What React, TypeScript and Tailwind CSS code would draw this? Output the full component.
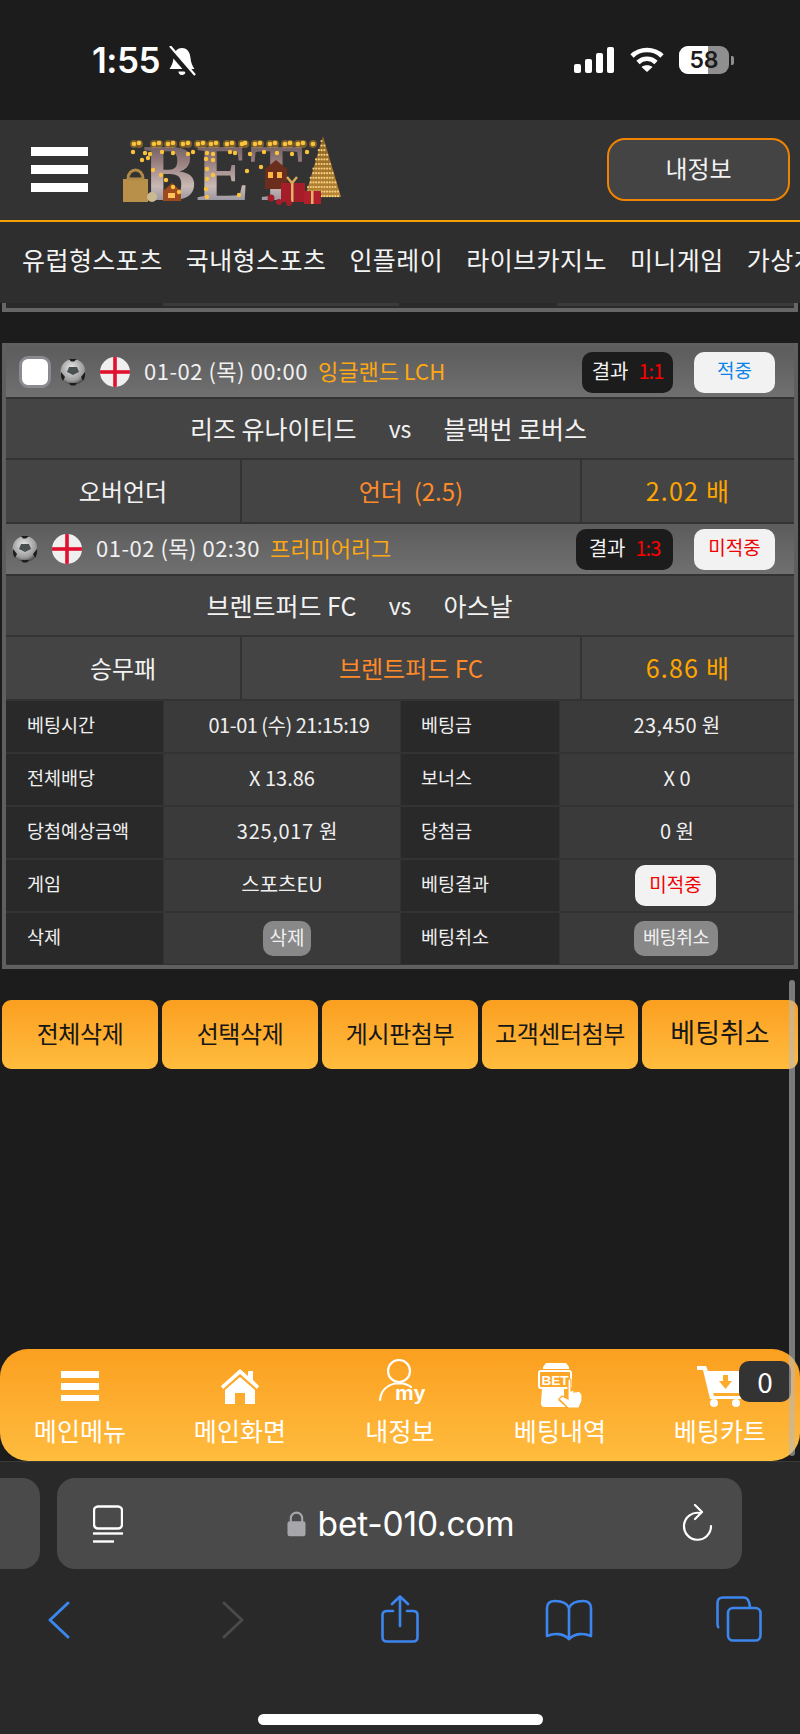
import React from "react";

const KR = "font-['Noto_Sans_CJK_KR','Noto_Sans',sans-serif]";

function Ball({ className = "" }: { className?: string }) {
  return (
    <svg viewBox="0 0 26 28" className={className}>
      <defs>
        <radialGradient id="ballg" cx="45%" cy="35%" r="70%">
          <stop offset="0" stopColor="#e8e8e8" />
          <stop offset="0.7" stopColor="#9a9a9a" />
          <stop offset="1" stopColor="#2a2a2a" />
        </radialGradient>
      </defs>
      <ellipse cx="13" cy="14" rx="12.5" ry="13" fill="url(#ballg)" />
      <path d="M9 9 L17 9 L19 14 L13 17 L7 14Z" fill="#4a4f52" />
      <path d="M1 14 L5 19 L3 23 A13 13 0 0 1 1 14Z M25 14 L21 19 L23 23 A13 13 0 0 0 25 14Z M9 25 L17 25 L15 27.5 L11 27.5Z M9 1 L17 1 L14 3.5 L11 3.5Z" fill="#1d1d1d" />
    </svg>
  );
}

function Flag({ className = "" }: { className?: string }) {
  return (
    <svg viewBox="0 0 30 30" className={className}>
      <circle cx="15" cy="15" r="15" fill="#efefef" />
      <clipPath id="fc"><circle cx="15" cy="15" r="15" /></clipPath>
      <g clipPath="url(#fc)" fill="#e0102f">
        <rect x="13.2" y="0" width="3.6" height="30" />
        <rect x="0" y="13.2" width="30" height="3.6" />
      </g>
    </svg>
  );
}

function Logo() {
  const top = [13, 18, 33, 38, 47, 52, 62, 67, 77, 82, 90, 95, 106, 111, 121, 124, 134, 139, 149, 154, 164, 169, 177, 182, 192];
  const second = [12, 24, 29, 41, 52, 67, 72, 86, 92, 109, 114, 129, 143, 156, 171, 186];
  const chain: [number, number][] = [
    [21, 29], [27, 27], [32, 39], [40, 44], [45, 49], [52, 56], [58, 61], [85, 28], [86, 38], [86, 48], [85, 58], [86, 66], [92, 29], [92, 44], [126, 40], [140, 36], [118, 64],
  ];
  const tree: [number, number][] = [];
  for (let r = 0; r < 13; r++) {
    const y = 10 + r * 4.6;
    const half = 1.5 + r * 1.35;
    for (let c = 0; c <= r; c++) {
      const x = 202 - half + (2 * half * (c + 0.5 * (r % 2))) / (r + 1);
      tree.push([x, y]);
    }
  }
  return (
    <svg viewBox="0 0 220 76" className="w-[220px] h-[76px] blur-[0.6px]">
      <defs>
        <linearGradient id="lg" x1="0" y1="0" x2="0" y2="1">
          <stop offset="0" stopColor="#46434c" />
          <stop offset="0.35" stopColor="#93797a" />
          <stop offset="0.65" stopColor="#c9b8b4" />
          <stop offset="0.85" stopColor="#8f8f9e" />
          <stop offset="1" stopColor="#4f5b70" />
        </linearGradient>
        <linearGradient id="tree" x1="0" y1="0" x2="0" y2="1">
          <stop offset="0" stopColor="#8a6226" />
          <stop offset="1" stopColor="#b98636" />
        </linearGradient>
      </defs>
      <text x="22" y="69" fontFamily="Liberation Serif, serif" fontWeight="700" fontSize="80" textLength="160" lengthAdjust="spacingAndGlyphs" fill="url(#lg)">BET</text>
      <path d="M42 60 l9 -8 9 8 v10 h-18z" fill="#9c4a1e" />
      <rect x="47" y="62" width="7" height="5" fill="#ffc35a" />
      <path d="M144 38 l11 -9 11 9 v20 h-22z" fill="#6b2e1c" />
      <rect x="147" y="41" width="5" height="6" fill="#ffb544" />
      <rect x="156" y="41" width="5" height="6" fill="#ffb544" />
      <path d="M202 5 L220 66 L184 66Z" fill="url(#tree)" />
      <g fill="#f5cf7d">
        {tree.map(([x, y], i) => (
          <circle key={i} cx={x} cy={y} r="1.1" />
        ))}
      </g>
      <rect x="2" y="48" width="25" height="23" fill="#b8904a" />
      <path d="M7 48 C7 36 22 36 22 48Z" fill="none" stroke="#b08a45" strokeWidth="3" />
      <circle cx="31" cy="66" r="5" fill="#cdb98f" />
      <rect x="160" y="52" width="24" height="19" fill="#a51d28" />
      <rect x="183" y="60" width="17" height="13" fill="#b0202c" />
      <rect x="170" y="52" width="2.5" height="19" fill="#e0b36a" />
      <rect x="190" y="60" width="2.5" height="13" fill="#e0b36a" />
      <path d="M166 46 l5 6 5 -6" fill="none" stroke="#d9a95a" strokeWidth="2.5" />
      <circle cx="150" cy="67" r="3.5" fill="#a51d28" /><circle cx="158" cy="71" r="3" fill="#a51d28" /><circle cx="168" cy="72" r="3" fill="#a51d28" />
      <g fill="#ffb020" opacity="0.35">
        {top.map((x, i) => <circle key={i} cx={x} cy={13} r="4" />)}
      </g>
      <g fill="#fbc23c">
        {top.map((x, i) => <circle key={i} cx={x} cy={13 - (i % 2)} r="2.3" />)}
        {second.map((x, i) => <circle key={i} cx={x} cy={21 + (i % 3)} r="2.2" />)}
        {chain.map(([x, y], i) => <circle key={i} cx={x} cy={y} r="2.2" />)}
      </g>
    </svg>
  );
}

function StatusBar() {
  return (
    <div className="h-[120px] bg-[#1c1c1c] flex items-start text-white shrink-0">
      <div className="flex items-center pl-[92px] pt-[40px] h-[80px] w-[400px]">
        <span className="text-[35px] leading-[40px] font-semibold font-['Inter',sans-serif] tracking-[-0.5px]">1:55</span>
        <svg viewBox="0 0 28 31" className="w-[28px] h-[31px] ml-[8px] mt-[2px]">
          <path d="M14 2 C8.5 2 6 6.5 5.5 12 C5 17 3.5 20 1.5 23 H26.5 C24.5 20 23 17 22.5 12 C22 6.5 19.5 2 14 2Z" fill="#fff" />
          <path d="M10.5 25.5 H17.5 A3.5 3.5 0 0 1 10.5 25.5Z" fill="#fff" />
          <path d="M0 2 L25 31" stroke="#1c1c1c" strokeWidth="5.5" />
          <path d="M2 0 L27 29" stroke="#fff" strokeWidth="2.2" />
        </svg>
      </div>
      <div className="flex items-center pl-[174px] pt-[40px] h-[80px]">
        <svg viewBox="0 0 40 26" className="w-[40px] h-[26px]" fill="#fff">
          <rect x="0" y="17" width="7" height="9" rx="2" />
          <rect x="11" y="12" width="7" height="14" rx="2" />
          <rect x="22" y="6" width="7" height="20" rx="2" />
          <rect x="33" y="0" width="7" height="26" rx="2" />
        </svg>
        <svg viewBox="0 0 34 26" className="w-[34px] h-[26px] ml-[16px]" fill="none" stroke="#fff" strokeWidth="4.6">
          <path d="M2 9 C10 1 24 1 32 9" />
          <path d="M8 15.5 C13 10.5 21 10.5 26 15.5" />
          <path d="M17 25 L11.5 20 C14 17.5 20 17.5 22.5 20Z" fill="#fff" stroke="none" />
        </svg>
        <div className="relative ml-[15px] w-[50px] h-[28px] rounded-[9px] overflow-hidden bg-[#8f8f8f] flex items-center justify-center">
          <div className="absolute left-0 top-0 bottom-0 w-[29px] bg-white" />
          <span className="relative text-[#1c1c1c] text-[23px] leading-[28px] font-semibold font-['Inter',sans-serif]">58</span>
        </div>
        <div className="w-[3px] h-[9px] ml-[2px] rounded-r-[2px] bg-[#8f8f8f]" />
      </div>
    </div>
  );
}

function Header() {
  return (
    <div className="h-[102px] bg-[#333333] border-b-2 border-[#f5a000] flex items-center shrink-0">
      <div className="ml-[31px] w-[57px] flex flex-col gap-[9px] -mt-[2px]">
        <div className="h-[9px] bg-white" />
        <div className="h-[9px] bg-white" />
        <div className="h-[9px] bg-white" />
      </div>
      <div className="ml-[33px] -mt-[2px]"><Logo /></div>
      <div className={`ml-auto mr-[10px] w-[183px] h-[63px] -mt-[2px] pb-[3px] rounded-[18px] border-2 border-[#f08400] bg-[#444444] flex items-center justify-center text-[#f2f2f2] text-[24px] ${KR}`}>
        내정보
      </div>
    </div>
  );
}

function TopNav() {
  const items = ["유럽형스포츠", "국내형스포츠", "인플레이", "라이브카지노", "미니게임", "가상게임"];
  return (
    <div className={`h-[81px] bg-[#2e2e2e] flex items-center pl-[22px] gap-[23px] overflow-hidden whitespace-nowrap text-[#f4f4f4] text-[25px] tracking-[0.45px] shrink-0 ${KR}`}>
      {items.map((t) => (
        <span key={t} className="-mt-[6px]">{t}</span>
      ))}
    </div>
  );
}

function Strip() {
  return (
    <div className="mx-[2px] h-[9px] border-x-4 border-b-4 border-[#666666] bg-[#2b2b2b] shrink-0">
      <div className="h-[3px] grid grid-cols-[157px_236px_158px_1fr]">
        <div className="bg-[#2a2a2a]" />
        <div className="bg-[#3a3a3a]" />
        <div className="bg-[#2a2a2a]" />
        <div className="bg-[#3a3a3a]" />
      </div>
    </div>
  );
}

function ResultPill({ score, wide }: { score: string; wide?: boolean }) {
  return (
    <div className={`${wide ? "w-[97px]" : "w-[91px]"} h-[41px] pb-[3px] rounded-[10px] bg-[#1c1c1c] flex items-center justify-center gap-[10px] text-[20px] text-[#f2f2f2]`}>
      <span>결과</span>
      <span className="text-[#ff0000] tracking-[-1px]">{score}</span>
    </div>
  );
}

function Match(props: {
  first: boolean;
  date: string;
  league: string;
  score: string;
  hit: boolean;
  home: string;
  away: string;
  type: string;
  pick: string;
  odds: string;
}) {
  return (
    <div className="flex flex-col">
      <div className={`${props.first ? "h-[50px] pl-[13px]" : "h-[50px] pl-[6px]"} bg-gradient-to-b from-[#5c5c5c] to-[#707070] flex items-center text-[22px] whitespace-nowrap`}>
        {props.first && (
          <div className="w-[32px] h-[32px] rounded-[9px] border-[3px] border-[#8a8a90] bg-white mr-[9px]" />
        )}
        <Ball className="w-[26px] h-[28px] mr-[14px]" />
        <Flag className="w-[30px] h-[30px] mr-[14px]" />
        <span className="text-[#f0f0f0] tracking-[0.5px] -mt-[4px]">{props.date}</span>
        <span className="ml-[10px] text-[#ffa812] -mt-[4px]">{props.league}</span>
        <div className="ml-auto mr-[19px] flex items-center gap-[21px]">
          <ResultPill score={props.score} wide={!props.first} />
          <div className={`w-[81px] h-[41px] pb-[3px] rounded-[10px] bg-[#f2f2f2] flex items-center justify-center text-[19px] ${props.hit ? "text-[#0a84e8]" : "text-[#f00000]"}`}>
            {props.hit ? "적중" : "미적중"}
          </div>
        </div>
      </div>
      <div className="mt-[2px] h-[59px] bg-[#444444] flex items-center text-[25px] text-[#f2f2f2]">
        <div className="flex-1 text-right pr-[30px]">{props.home}</div>
        <div className="w-[27px] text-center text-[23px] shrink-0">vs</div>
        <div className="flex-1 text-left pl-[30px]">{props.away}</div>
      </div>
      <div className="mt-[2px] h-[62px] grid grid-cols-[234px_1fr_212px] gap-[2px] text-[24px] text-center">
        <div className="bg-[#444444] flex items-center justify-center text-[#f2f2f2]">{props.type}</div>
        <div className="bg-[#444444] flex items-center justify-center text-[#ff8a2a] whitespace-pre">{props.pick}</div>
        <div className="bg-[#444444] flex items-center justify-center text-[#ffa500] text-[25px] tracking-[1.2px]">{props.odds}</div>
      </div>
    </div>
  );
}

function Info({ rows }: { rows: [string, React.ReactNode, string, React.ReactNode][] }) {
  return (
    <div className="mt-[2px] pb-[1px] flex flex-col gap-[2px] text-[18.5px] text-[#f0f0f0]">
      {rows.map((r, i) => (
        <div key={i} className="h-[51px] grid grid-cols-[157px_236px_158px_1fr] gap-x-px">
          <div className="bg-[#292929] flex items-center pl-[21px] pb-[4px]">{r[0]}</div>
          <div className="bg-[#3a3a3a] flex items-center justify-center text-[20px] pb-[4px]">{r[1]}</div>
          <div className="bg-[#292929] flex items-center pl-[20px] pb-[4px]">{r[2]}</div>
          <div className="bg-[#3a3a3a] flex items-center justify-center text-[20px] pb-[4px]">{r[3]}</div>
        </div>
      ))}
    </div>
  );
}

function Card() {
  return (
    <div className={`mx-[2px] mt-[31px] border-4 border-[#5f5f5f] bg-[#333333] shrink-0 ${KR}`}>
      <Match first date="01-02 (목) 00:00" league="잉글랜드 LCH" score="1:1" hit home="리즈 유나이티드" away="블랙번 로버스" type="오버언더" pick="언더  (2.5)" odds="2.02 배" />
      <div className="h-[2px]" />
      <Match first={false} date="01-02 (목) 02:30" league="프리미어리그" score="1:3" hit={false} home="브렌트퍼드 FC" away="아스날" type="승무패" pick="브렌트퍼드 FC" odds="6.86 배" />
      <Info
        rows={[
          ["베팅시간", <span className="ml-[14px] tracking-[-0.5px]">01-01 (수) 21:15:19</span>, "베팅금", <span className="tracking-[0.4px]">23,450 원</span>],
          ["전체배당", "X 13.86", "보너스", "X 0"],
          ["당첨예상금액", <span className="ml-[11px] tracking-[0.7px]">325,017 원</span>, "당첨금", "0 원"],
          ["게임", "스포츠EU", "베팅결과", <div className="mt-[4px] mr-[3px] w-[81px] h-[41px] pb-[3px] rounded-[10px] bg-[#f2f2f2] flex items-center justify-center text-[19px] text-[#f00000]">미적중</div>],
          ["삭제", <div className="mt-[4px] ml-[10px] w-[48px] h-[35px] pb-[3px] rounded-[10px] bg-[#888888] flex items-center justify-center text-[19px]">삭제</div>, "베팅취소", <div className="mt-[4px] mr-[2px] w-[84px] h-[35px] pb-[3px] rounded-[10px] bg-[#888888] flex items-center justify-center text-[18.5px] tracking-[-0.5px]">베팅취소</div>],
        ]}
      />
    </div>
  );
}

function Buttons() {
  const items = ["전체삭제", "선택삭제", "게시판첨부", "고객센터첨부"];
  return (
    <div className={`mx-[2px] mt-[31px] grid grid-cols-5 gap-[4px] text-[#161616] shrink-0 ${KR}`}>
      {items.map((t) => (
        <div key={t} className="h-[69px] pb-[3px] rounded-[9px] bg-gradient-to-b from-[#fb9f1f] to-[#ffbc3d] flex items-center justify-center text-[24px] tracking-[-0.4px]">
          {t}
        </div>
      ))}
      <div className="h-[69px] pb-[5px] rounded-[9px] bg-gradient-to-b from-[#fb9f1f] to-[#ffbc3d] flex items-center justify-center text-[27px]">
        베팅취소
      </div>
    </div>
  );
}

function BottomNav() {
  const cell = "flex flex-col items-center";
  const icon = "h-[46px] flex items-end justify-center";
  const label = "mt-[8px] text-[25px] leading-[34px] text-white tracking-[0.1px]";
  return (
    <div className={`relative h-[112px] rounded-[28px] bg-gradient-to-b from-[#fb9f1f] to-[#ffbc3d] grid grid-cols-5 pt-[10px] shrink-0 ${KR}`}>
      <div className={cell}>
        <div className={icon}>
          <div className="w-[38px] flex flex-col gap-[5px] mb-[4px]">
            <div className="h-[7px] bg-white" />
            <div className="h-[7px] bg-white" />
            <div className="h-[6px] bg-white" />
          </div>
        </div>
        <span className={label}>메인메뉴</span>
      </div>
      <div className={cell}>
        <div className={icon}>
          <svg viewBox="0 0 38 36" className="w-[38px] h-[36px] mb-[1px]" fill="#fff">
            <path d="M19 1 L27 8 V3 H32 V12 L38 18 L36 21 L19 6 L2 21 L0 18Z" />
            <path d="M4 22 L19 9 L34 22 V36 H24 V25 H14 V36 H4Z" />
          </svg>
        </div>
        <span className={label}>메인화면</span>
      </div>
      <div className={cell}>
        <div className={icon}>
          <svg viewBox="0 0 47 46" className="w-[47px] h-[46px] ml-[4px]">
            <circle cx="20" cy="12" r="11" fill="none" stroke="#fff" strokeWidth="2.2" />
            <path d="M1 41 C2 31 9 26 16 24.5 L24 24.5 C28 25.5 31 27 32 28" fill="none" stroke="#fff" strokeWidth="2.2" strokeLinecap="round" />
            <text x="16" y="41" fill="#fff" fontSize="21" fontWeight="700" fontFamily="Liberation Sans, sans-serif">my</text>
          </svg>
        </div>
        <span className={label}>내정보</span>
      </div>
      <div className={cell}>
        <div className={icon}>
          <svg viewBox="0 0 46 46" className="w-[46px] h-[46px] -mb-[3px] ml-[2px]" fill="#fff">
            <path d="M8 1 H28 L31 5 V7 H5 V5Z" />
            <rect x="1" y="9" width="32" height="17" rx="2" fill="none" stroke="#fff" strokeWidth="2" />
            <text x="3.5" y="23" fontSize="13.5" fontWeight="700" fontFamily="Liberation Sans, sans-serif">BET</text>
            <path d="M4 27 H26 V34 L20 38 L28 45 H6 Q3 45 3 41Z" />
            <path d="M30 18 Q32 16 33 18 V29 L36 28 V30 L38 28 V30 L41 29 L43 31 L44 33 V39 L41 46 H30 L21 37 L24 34 L30 37Z" stroke="#fcab2c" strokeWidth="1.2" />
          </svg>
        </div>
        <span className={label}>베팅내역</span>
      </div>
      <div className={cell}>
        <div className={icon}>
          <svg viewBox="0 0 46 42" className="w-[46px] h-[42px] -mb-[2px] -ml-[1px]" fill="#fff">
            <path d="M0 1 H9 L11 6 H46 V28 H16 L17 31 H44 V34 H13 L6 5 H0Z" />
            <circle cx="17" cy="38" r="4" /><circle cx="39" cy="38" r="4" />
            <path d="M26 10 H31 V16 H35 L28.5 24 L22 16 H26Z" fill="#fcab2c" />
          </svg>
        </div>
        <span className={label}>베팅카트</span>
      </div>
      <div className="absolute left-[739px] top-[12px] w-[52px] h-[41px] rounded-[10px] bg-[#333333] flex items-center justify-center text-white text-[28px] leading-[41px]">
        0
      </div>
    </div>
  );
}

function Safari() {
  return (
    <div className="flex-1 bg-[#292929] border-t border-[#3a3a3a] flex flex-col">
      <div className="mt-[16px] h-[91px] flex gap-[17px]">
        <div className="w-[40px] rounded-r-[18px] bg-[#4a4a4a]" />
        <div className="w-[685px] rounded-[18px] bg-[#4a4a4a] relative flex items-center justify-center text-white">
          <svg viewBox="0 0 30 38" className="absolute left-[36px] top-[27px] w-[30px] h-[38px]" fill="none" stroke="#fff" strokeWidth="2.4">
            <rect x="1" y="1.5" width="28" height="22" rx="4" />
            <path d="M0 28.5 H30" />
            <path d="M0 36.5 H21" />
          </svg>
          <div className="flex items-center gap-[12px] ml-[2px]">
            <svg viewBox="0 0 20 26" className="w-[19px] h-[26px]" fill="#a6a6ab">
              <path d="M4 11 V7 a6 6 0 0 1 12 0 V11" fill="none" stroke="#a6a6ab" strokeWidth="2.2" />
              <rect x="0.5" y="10" width="19" height="16" rx="2.5" />
            </svg>
            <span className="text-[33.5px] leading-[40px] font-['Inter',sans-serif] font-normal tracking-[-0.2px]">bet-010.com</span>
          </div>
          <svg viewBox="0 0 32 38" className="absolute right-[28px] top-[26px] w-[32px] h-[38px]" fill="none" stroke="#fff" strokeWidth="2.2" strokeLinecap="round" strokeLinejoin="round">
            <path d="M18 7 A13.5 13.5 0 1 0 29 20" transform="translate(0 2)" />
            <path d="M13 1 L20 8 L13 15" />
          </svg>
        </div>
      </div>
      <div className="relative mt-[26px] h-[50px]">
        <svg viewBox="0 0 22 38" className="absolute left-[48px] top-[6px] w-[22px] h-[38px]" fill="none" stroke="#3c86f0" strokeWidth="3" strokeLinecap="round" strokeLinejoin="round">
          <path d="M20 2 L2 19 L20 36" />
        </svg>
        <svg viewBox="0 0 22 38" className="absolute left-[222px] top-[6px] w-[22px] h-[38px]" fill="none" stroke="#4a4a4a" strokeWidth="3" strokeLinecap="round" strokeLinejoin="round">
          <path d="M2 2 L20 19 L2 36" />
        </svg>
        <svg viewBox="0 0 38 48" className="absolute left-[381px] top-[0px] w-[38px] h-[48px]" fill="none" stroke="#3c86f0" strokeWidth="2.6" strokeLinecap="round" strokeLinejoin="round">
          <path d="M12 16 H6 Q1.5 16 1.5 20 V42 Q1.5 46.5 6 46.5 H32 Q36.5 46.5 36.5 42 V20 Q36.5 16 32 16 H26" />
          <path d="M19 31 V2" />
          <path d="M11 9 L19 1.5 L27 9" />
        </svg>
        <svg viewBox="0 0 48 42" className="absolute left-[545px] top-[4px] w-[48px] h-[42px]" fill="none" stroke="#3c86f0" strokeWidth="2.6" strokeLinecap="round" strokeLinejoin="round">
          <path d="M24 9 C22 4 16 2 10 2 Q2 2 2 9 V37 C9 34 18 34 24 40 C30 34 39 34 46 37 V9 Q46 2 38 2 C32 2 26 4 24 9Z" />
          <path d="M24 9 V40" />
        </svg>
        <svg viewBox="0 0 46 46" className="absolute left-[716px] top-[1px] w-[46px] h-[46px]" fill="none" stroke="#3c86f0" strokeWidth="2.6" strokeLinejoin="round">
          <path d="M3 32 Q1.5 31 1.5 28 V7 Q1.5 1.5 7 1.5 H28 Q33 1.5 34 11" />
          <rect x="12" y="12" width="32.5" height="32.5" rx="5" />
        </svg>
      </div>
      <div className="mt-[69px] mx-auto w-[285px] h-[11px] rounded-full bg-white" />
    </div>
  );
}

export default function App() {
  return (
    <div className="relative w-[800px] h-[1734px] bg-[#1c1c1c] flex flex-col overflow-hidden">
      <StatusBar />
      <Header />
      <TopNav />
      <Strip />
      <Card />
      <Buttons />
      <div className="flex-1" />
      <BottomNav />
      <div className="h-[273px] flex flex-col shrink-0"><Safari /></div>
      <div className="absolute left-[789px] top-[980px] w-[6px] h-[476px] rounded-full bg-[#b9b9b9]/60" />
    </div>
  );
}
